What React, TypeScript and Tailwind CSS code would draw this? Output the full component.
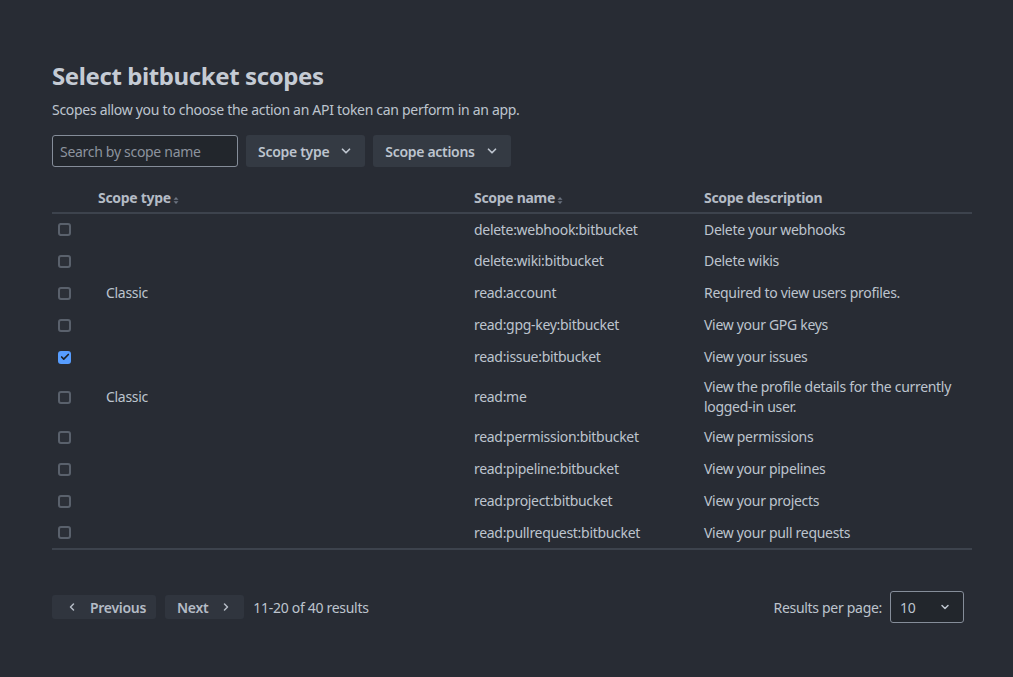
import { ChevronDown, ChevronLeft, ChevronRight, Check } from 'lucide-react'

type Row = { type?: string; name: string; desc: string; checked?: boolean }

const rows: Row[] = [
  { name: 'delete:webhook:bitbucket', desc: 'Delete your webhooks' },
  { name: 'delete:wiki:bitbucket', desc: 'Delete wikis' },
  { type: 'Classic', name: 'read:account', desc: 'Required to view users profiles.' },
  { name: 'read:gpg-key:bitbucket', desc: 'View your GPG keys' },
  { name: 'read:issue:bitbucket', desc: 'View your issues', checked: true },
  { type: 'Classic', name: 'read:me', desc: 'View the profile details for the currently logged-in user.' },
  { name: 'read:permission:bitbucket', desc: 'View permissions' },
  { name: 'read:pipeline:bitbucket', desc: 'View your pipelines' },
  { name: 'read:project:bitbucket', desc: 'View your projects' },
  { name: 'read:pullrequest:bitbucket', desc: 'View your pull requests' },
]

function SortIcon() {
  return (
    <svg width="6" height="9" viewBox="0 0 6 9" className="ml-0.5 mt-0.5 inline-block text-[#6b7380]">
      <path d="M3 1 L5.5 3.8 H0.5 Z" fill="currentColor" />
      <path d="M3 8 L5.5 5.2 H0.5 Z" fill="currentColor" />
    </svg>
  )
}

function Checkbox({ checked }: { checked?: boolean }) {
  if (checked) {
    return (
      <span className="flex h-[13px] w-[13px] items-center justify-center rounded-[3px] bg-[#579dff]">
        <Check size={10} strokeWidth={4} className="text-[#1d2125]" />
      </span>
    )
  }
  return <span className="block h-[13px] w-[13px] rounded-[3px] border-2 border-[#5a616c] bg-[#2c3038]" />
}

export default function App() {
  return (
    <div
      className="min-h-screen bg-[#282c34] px-[52px] pt-[62px] text-[14px] tracking-[-0.3px] text-[#bdc4ce]"
      style={{ fontFamily: '"Noto Sans", "Open Sans", sans-serif' }}
    >
      <h1 className="text-[24px] font-bold leading-[28px] tracking-[-0.4px] text-[#c5cbd4]">Select bitbucket scopes</h1>
      <p className="mt-[10px] leading-[20px]">Scopes allow you to choose the action an API token can perform in an app.</p>

      <div className="mt-[15px] flex items-center gap-[8px]">
        <input
          placeholder="Search by scope name"
          className="h-[32px] w-[186px] rounded-[3px] border border-[#858d99] bg-[#22262c] px-[7px] text-[14px] text-[#bdc4ce] placeholder:text-[#8c939e] outline-none"
        />
        <button className="flex h-[32px] items-center gap-[10px] rounded-[3px] bg-[#343a43] pl-[12px] pr-[12px] font-semibold text-[#bdc4ce]">
          Scope type
          <ChevronDown size={14} strokeWidth={3} />
        </button>
        <button className="flex h-[32px] items-center gap-[10px] rounded-[3px] bg-[#343a43] pl-[12px] pr-[12px] font-semibold text-[#bdc4ce]">
          Scope actions
          <ChevronDown size={14} strokeWidth={3} />
        </button>
      </div>

      <table className="mt-[18px] w-[920px] border-collapse">
        <thead>
          <tr className="border-b-2 border-[#3d434d]">
            <th className="w-[46px]" />
            <th className="h-[28px] w-[376px] pb-[4px] text-left align-bottom font-bold text-[#b4bbc5]">
              Scope type<SortIcon />
            </th>
            <th className="w-[230px] pb-[4px] text-left align-bottom font-bold text-[#b4bbc5]">
              Scope name<SortIcon />
            </th>
            <th className="pb-[4px] text-left align-bottom font-bold text-[#b4bbc5]">Scope description</th>
          </tr>
        </thead>
        <tbody className="border-b-2 border-[#3d434d]">
          {rows.map((r) => (
            <tr key={r.name}>
              <td className="h-[32px] pl-[6px] align-middle">
                <Checkbox checked={r.checked} />
              </td>
              <td className="pl-[8px] leading-[20px]">{r.type}</td>
              <td className="leading-[20px]">{r.name}</td>
              <td className="py-[4px] pr-[8px] leading-[20px]">{r.desc}</td>
            </tr>
          ))}
        </tbody>
      </table>

      <div className="mt-[41px] flex w-[912px] items-center justify-between">
        <div className="flex items-center gap-[9px]">
          <button className="flex h-[24px] items-center gap-[12px] rounded-[3px] bg-[#30353e] pl-[14px] pr-[10px] font-semibold text-[#b4bbc5]">
            <ChevronLeft size={12} strokeWidth={3} />
            Previous
          </button>
          <button className="flex h-[24px] items-center gap-[12px] rounded-[3px] bg-[#30353e] pl-[12px] pr-[12px] font-semibold text-[#b4bbc5]">
            Next
            <ChevronRight size={12} strokeWidth={3} />
          </button>
          <span>11-20 of 40 results</span>
        </div>
        <div className="flex items-center gap-[8px]">
          <span>Results per page:</span>
          <div className="flex h-[32px] w-[74px] items-center justify-between rounded-[3px] border border-[#858d99] bg-[#22262c] pl-[9px] pr-[12px]">
            <span>10</span>
            <ChevronDown size={12} strokeWidth={3} />
          </div>
        </div>
      </div>
    </div>
  )
}
